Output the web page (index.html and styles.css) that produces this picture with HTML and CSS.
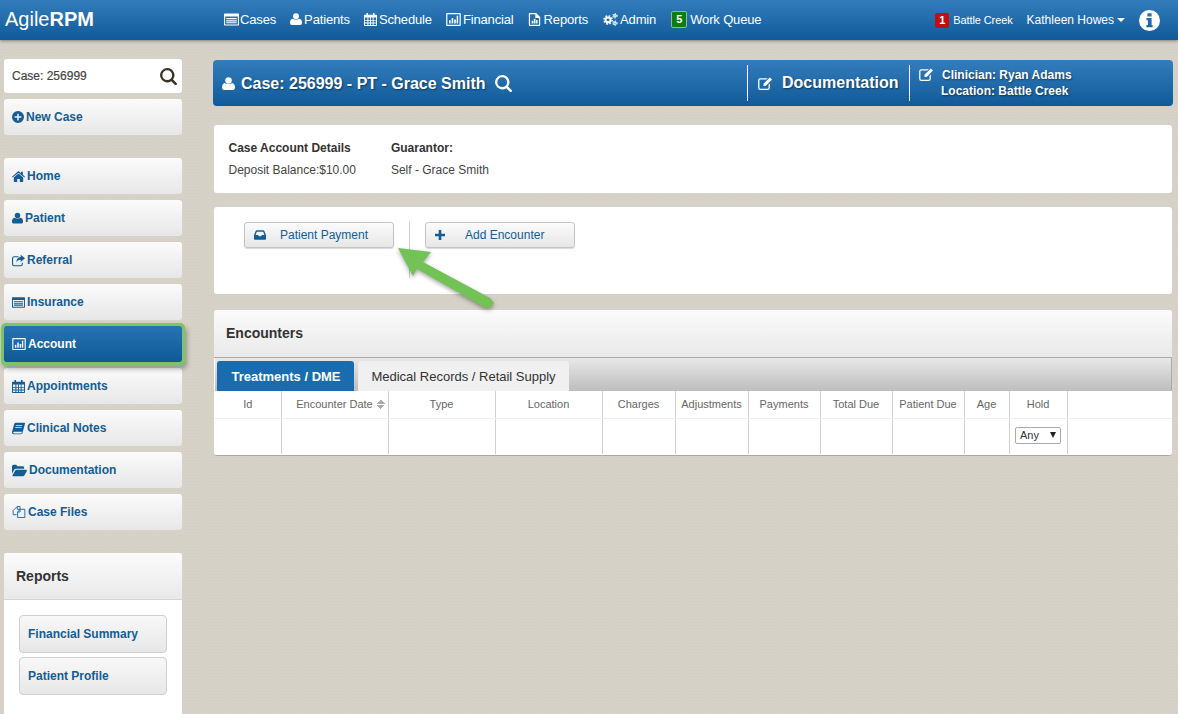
FILE: index.html
```html
<!DOCTYPE html>
<html lang="en">
<head>
    <meta charset="UTF-8">
    <meta name="viewport" content="width=device-width, initial-scale=1.0">
    <link rel="stylesheet" href="styles.css">
    <title>AgileRPM</title>
</head>
<body>
    <svg class="sprites" width="0" height="0">
        <symbol id="i-list" viewBox="0 0 20 16"><path fill-rule="evenodd" d="M1 0h18a1 1 0 0 1 1 1v14a1 1 0 0 1-1 1H1a1 1 0 0 1-1-1V1a1 1 0 0 1 1-1zm.5 4v10.500h17V4zM3 6h14v1.500H3zm0 3h14v1.500H3zm0 2.500h14V13H3z"/></symbol>
        <symbol id="i-user" viewBox="0 0 16 16"><circle cx="8" cy="4.200" r="4"/><path d="M3.500 7.500C5 9 11 9 12.500 7.500 14.800 8 16 10 16 13c0 2-1 3-2.500 3h-11C1 16 0 15 0 13c0-3 1.200-5 3.500-5.500z"/></symbol>
        <symbol id="i-cal" viewBox="0 0 16 16"><path fill-rule="evenodd" d="M3 0h2v2h6V0h2v2h2a1 1 0 0 1 1 1v12a1 1 0 0 1-1 1H1a1 1 0 0 1-1-1V3a1 1 0 0 1 1-1h2zM1.200 5.500v3h3v-3zm4.200 0v3h2.100v-3zm3.200 0v3h2.100v-3zm3.200 0v3h3v-3zM1.200 9.600v2.200h3V9.600zm4.200 0v2.200h2.100V9.600zm3.200 0v2.200h2.100V9.600zm3.200 0v2.200h3V9.600zM1.200 12.900v1.900h3v-1.900zm4.200 0v1.900h2.100v-1.900zm3.200 0v1.900h2.100v-1.900zm3.200 0v1.900h3v-1.900z"/></symbol>
        <symbol id="i-chart" viewBox="0 0 18 16"><path fill-rule="evenodd" d="M1 0h16a1 1 0 0 1 1 1v14a1 1 0 0 1-1 1H1a1 1 0 0 1-1-1V1a1 1 0 0 1 1-1zm.5 1.500v13h15v-13zM3.500 9h2v4h-2zm3.200-3h2v7h-2zm3.200 2h2v5h-2zm3-4.500h1.800V13h-1.800z"/></symbol>
        <symbol id="i-report" viewBox="0 0 14 16"><path fill-rule="evenodd" d="M1 0h8l5 5v10a1 1 0 0 1-1 1H1a1 1 0 0 1-1-1V1a1 1 0 0 1 1-1zm.5 1.500v13h11V6H8V1.500zM3.500 9.500h2v3.500h-2zM6.200 7h2v6h-2zM9 8.500h1.800V13H9z"/></symbol>
        <symbol id="i-cogs" viewBox="0 0 18 16">
            <g fill="none" stroke="currentColor">
                <circle cx="6" cy="8.500" r="3" stroke-width="2.400"/>
                <circle cx="6" cy="8.500" r="5" stroke-width="1.800" stroke-dasharray="2.200 1.730"/>
                <circle cx="14.500" cy="3.500" r="1.500" stroke-width="1.500"/>
                <circle cx="14.500" cy="3.500" r="2.800" stroke-width="1.200" stroke-dasharray="1.400 1.530"/>
                <circle cx="14.500" cy="12.500" r="1.500" stroke-width="1.500"/>
                <circle cx="14.500" cy="12.500" r="2.800" stroke-width="1.200" stroke-dasharray="1.400 1.530"/>
            </g>
        </symbol>
        <symbol id="i-search" viewBox="0 0 16 16"><path fill-rule="evenodd" d="M6.800 0a6.800 6.800 0 0 1 5.500 10.800l3.300 3.300a1.200 1.200 0 0 1-1.700 1.700l-3.300-3.300A6.800 6.800 0 1 1 6.800 0zm0 2.200a4.600 4.600 0 1 0 0 9.200 4.600 4.600 0 0 0 0-9.200z"/></symbol>
        <symbol id="i-plus-c" viewBox="0 0 16 16"><path fill-rule="evenodd" d="M8 0a8 8 0 1 1 0 16A8 8 0 0 1 8 0zM7 3.500v3.500H3.500v2H7v3.500h2V9h3.500V7H9V3.500z"/></symbol>
        <symbol id="i-home" viewBox="0 0 18 15"><path d="M9 0l3.500 3V1H15v4.200L18 8l-.8 1L9 2.200.8 9 0 8zM9 3.500l6.500 5.400V14a1 1 0 0 1-1 1h-3.700v-4H7.200v4H3.500a1 1 0 0 1-1-1V8.900z"/></symbol>
        <symbol id="i-share" viewBox="0 0 18 16"><path d="M12 0l6 5-6 5V7C9 7 7 8 6 11c0-5 2-7.500 6-8z"/><path d="M3 2h6v1.500H3A1.500 1.500 0 0 0 1.500 5v8A1.500 1.500 0 0 0 3 14.500h9a1.500 1.500 0 0 0 1.500-1.500v-2H15v2a3 3 0 0 1-3 3H3a3 3 0 0 1-3-3V5a3 3 0 0 1 3-3z"/></symbol>
        <symbol id="i-book" viewBox="0 0 16 14"><path fill-rule="evenodd" d="M4 0h11a1 1 0 0 1 1 1l-3 11a2 2 0 0 1-2 2H2a2 2 0 0 1-2-2c0-.6.100-1 .3-1.500L2.500 2A3 3 0 0 1 4 0zm.8 3l-.2.8h7.800l.2-.8zm-.7 2.500l-.2.8h7.800l.2-.8zM2.500 11c-.7 0-1 .4-1 1s.3 1 1 1h8.600c.4 0 .6-.2.700-.5l.4-1.500z"/></symbol>
        <symbol id="i-folder" viewBox="0 0 18 14"><path d="M0 2a2 2 0 0 1 2-2h3l1.500 2H13a1.500 1.500 0 0 1 1.500 1.500V5H5a3 3 0 0 0-2.600 1.500L0 11z"/><path d="M5 6.200h12c.9 0 1.200.7.800 1.400l-3 5.400a2 2 0 0 1-1.700 1H1.500c-.9 0-1.200-.7-.8-1.400l3-5.400A2 2 0 0 1 5 6.200z"/></symbol>
        <symbol id="i-files" viewBox="0 0 18 17"><path fill="none" stroke="currentColor" stroke-width="1.200" d="M6.500.700h4v4l-4 0zM6.500.700L.7 6.500v5.800h5M10.500 4.700h6.800v11.600H7V8.500zM7 8.500h3.500V4.700"/></symbol>
        <symbol id="i-inbox" viewBox="0 0 14 11"><path fill-rule="evenodd" d="M3 0h8a1 1 0 0 1 .9.600L14 5.500V10a1 1 0 0 1-1 1H1a1 1 0 0 1-1-1V5.500L2.100.600A1 1 0 0 1 3 0zm.3 1.600L1.800 5.500h3l.8 1.500h2.800l.8-1.500h3l-1.500-3.900z"/></symbol>
        <symbol id="i-plus" viewBox="0 0 10 10"><path d="M3.700 0h2.600v3.700H10v2.600H6.300V10H3.700V6.300H0V3.700h3.700z"/></symbol>
        <symbol id="i-edit" viewBox="0 0 17 15"><path d="M2.500 1.500H11L9.600 3H2.500A1 1 0 0 0 1.500 4v8.500a1 1 0 0 0 1 1H11a1 1 0 0 0 1-1V9l1.500-1.500v5A2.500 2.500 0 0 1 11 15H2.500A2.500 2.500 0 0 1 0 12.500V4a2.500 2.500 0 0 1 2.500-2.500z"/><path d="M13.500.500l2.500 2.500-7 7-3 .5.500-3z"/></symbol>
        <symbol id="i-info" viewBox="0 0 22 22"><path fill-rule="evenodd" d="M11 0a11 11 0 1 1 0 22 11 11 0 0 1 0-22zM8.800 3.500v3.200h4.400V3.500zM7.800 8.500v2.300h1.500v5H7.800V18h6.400v-2.200h-1V8.500z"/></symbol>
    </svg>

    <header class="topbar">
        <div class="logo">Agile<b>RPM</b></div>
        <nav class="topnav">
            <a class="tight"><svg class="ic w15"><use href="#i-list"/></svg>Cases</a>
            <a><svg class="ic w12"><use href="#i-user"/></svg>Patients</a>
            <a><svg class="ic w13"><use href="#i-cal"/></svg>Schedule</a>
            <a><svg class="ic w15"><use href="#i-chart"/></svg>Financial</a>
            <a class="wide"><svg class="ic w13"><use href="#i-report"/></svg>Reports</a>
            <a><svg class="ic w15"><use href="#i-cogs"/></svg>Admin</a>
            <a class="queue"><span class="count green">5</span>Work Queue</a>
        </nav>
        <div class="topright">
            <span class="count red">1</span>
            <span class="site">Battle Creek</span>
            <span class="who">Kathleen Howes<i class="caret"></i></span>
            <svg class="info"><use href="#i-info"/></svg>
        </div>
    </header>

    <div class="shell">
        <aside class="sidebar">
            <div class="searchbox">
                <span>Case: 256999</span>
                <svg class="searchicon"><use href="#i-search"/></svg>
            </div>
            <a class="sidebtn newcase"><svg class="ic w12"><use href="#i-plus-c"/></svg>New Case</a>

            <div class="sidemenu">
                <a class="sidebtn"><svg class="ic w13"><use href="#i-home"/></svg>Home</a>
                <a class="sidebtn"><svg class="ic w11"><use href="#i-user"/></svg>Patient</a>
                <a class="sidebtn"><svg class="ic w13"><use href="#i-share"/></svg>Referral</a>
                <a class="sidebtn"><svg class="ic w13"><use href="#i-list"/></svg>Insurance</a>
                <a class="sidebtn active"><svg class="ic w14"><use href="#i-chart"/></svg>Account</a>
                <a class="sidebtn"><svg class="ic w13"><use href="#i-cal"/></svg>Appointments</a>
                <a class="sidebtn"><svg class="ic w13"><use href="#i-book"/></svg>Clinical Notes</a>
                <a class="sidebtn"><svg class="ic w15"><use href="#i-folder"/></svg>Documentation</a>
                <a class="sidebtn"><svg class="ic w14"><use href="#i-files"/></svg>Case Files</a>
            </div>

            <div class="reports">
                <h3>Reports</h3>
                <div class="reportlist">
                    <a class="reportbtn">Financial Summary</a>
                    <a class="reportbtn">Patient Profile</a>
                </div>
            </div>
        </aside>

        <main class="content">
            <div class="casebar">
                <div class="casetitle">
                    <svg class="ic w13"><use href="#i-user"/></svg>
                    <span>Case: 256999 - PT - Grace Smith</span>
                    <svg class="ic w17"><use href="#i-search"/></svg>
                </div>
                <div class="casedoc">
                    <svg class="ic w15"><use href="#i-edit"/></svg>
                    <span>Documentation</span>
                </div>
                <div class="casemeta">
                    <svg class="ic w15"><use href="#i-edit"/></svg>
                    <div class="metalines">
                        <div>Clinician: Ryan Adams</div>
                        <div>Location: Battle Creek</div>
                    </div>
                </div>
            </div>

            <section class="card details">
                <div class="detailcol">
                    <h4>Case Account Details</h4>
                    <p>Deposit Balance:$10.00</p>
                </div>
                <div class="detailcol">
                    <h4>Guarantor:</h4>
                    <p>Self - Grace Smith</p>
                </div>
            </section>

            <section class="card actions">
                <a class="actionbtn"><svg class="ic w14"><use href="#i-inbox"/></svg><span>Patient Payment</span></a>
                <i class="actionsep"></i>
                <a class="actionbtn"><svg class="ic w10"><use href="#i-plus"/></svg><span>Add Encounter</span></a>
            </section>

            <section class="encounters">
                <h3>Encounters</h3>
                <div class="tabs">
                    <a class="tab on">Treatments / DME</a>
                    <a class="tab">Medical Records / Retail Supply</a>
                </div>
                <table class="grid">
                    <colgroup>
                        <col class="c-id"><col class="c-date"><col class="c-type"><col class="c-loc">
                        <col class="c-chg"><col class="c-adj"><col class="c-pay"><col class="c-tot">
                        <col class="c-pat"><col class="c-age"><col class="c-hold"><col>
                    </colgroup>
                    <tr class="headrow">
                        <th>Id</th>
                        <th>Encounter Date<i class="sort"></i></th>
                        <th>Type</th>
                        <th>Location</th>
                        <th>Charges</th>
                        <th>Adjustments</th>
                        <th>Payments</th>
                        <th>Total Due</th>
                        <th>Patient Due</th>
                        <th>Age</th>
                        <th>Hold</th>
                        <th></th>
                    </tr>
                    <tr class="filterrow">
                        <td></td><td></td><td></td><td></td><td></td><td></td><td></td><td></td><td></td><td></td>
                        <td><span class="anyselect">Any<i></i></span></td>
                        <td></td>
                    </tr>
                </table>
            </section>
        </main>
    </div>

    <svg class="arrow" width="110" height="75" viewBox="390 240 110 75">
        <path d="M398 248L431 252 423 262 490 298 494 303 490 308 484 307 417 269 413 276z" fill="#72c255"/>
    </svg>
</body>
</html>
```

FILE: styles.css
```css
html, body {
    margin: 0;
    height: 714px;
    overflow: hidden;
}

body {
    position: relative;
    background-color: #d6d2c8;
    background-image: radial-gradient(#d2cec4 1px, transparent 1px);
    background-size: 3px 3px;
    font-family: "Liberation Sans", Arial, sans-serif;
    font-size: 12px;
    color: #333;
}

a {
    display: block;
}

.sprites {
    position: absolute;
}

.ic {
    fill: currentColor;
    height: 14px;
    flex: none;
}

.w10 { width: 10px; height: 10px; }
.w11 { width: 11px; height: 12px; }
.w12 { width: 12px; height: 12px; }
.w13 { width: 13px; height: 13px; }
.w14 { width: 14px; height: 12px; }
.w15 { width: 15px; height: 13px; }
.w17 { width: 17px; height: 17px; }

/* barra de cima */
.topbar {
    height: 40px;
    display: flex;
    align-items: center;
    background: linear-gradient(to bottom, #337dbd, #115a9a);
    box-shadow: 0 1px 3px rgba(0, 0, 0, 0.4);
    color: #fff;
}

.logo {
    width: 224px;
    padding-left: 5px;
    padding-bottom: 1px;
    box-sizing: border-box;
    font-size: 20px;
}

.topnav {
    display: flex;
    align-items: center;
    gap: 14px;
    padding-bottom: 2px;
    font-size: 13px;
    letter-spacing: -0.15px;
}

.topnav a {
    display: flex;
    align-items: center;
    gap: 2px;
}

.topnav a.tight {
    gap: 1px;
}

.topnav a.wide {
    gap: 3px;
    margin-right: 1px;
}

.topnav .queue {
    margin-left: 1px;
    gap: 3px;
}

.count {
    display: inline-block;
    width: 14px;
    height: 15px;
    line-height: 15px;
    text-align: center;
    border-radius: 2px;
    font-size: 11px;
    font-weight: bold;
    color: #fff;
}

.count.green {
    background: #0b7d12;
    border: 1px solid #8fb89a;
}

.count.red {
    background: #c10d12;
}

.topright {
    margin-left: auto;
    display: flex;
    align-items: center;
    padding-right: 18px;
}

.site {
    margin-left: 4px;
    font-size: 11px;
    letter-spacing: -0.1px;
}

.who {
    margin-left: 14px;
    font-size: 12px;
}

.caret {
    display: inline-block;
    margin-left: 3px;
    vertical-align: 2px;
    border-top: 4px solid #fff;
    border-left: 4px solid transparent;
    border-right: 4px solid transparent;
}

.info {
    width: 21px;
    height: 21px;
    margin-left: 14px;
    fill: #fff;
}

.shell {
    display: flex;
}

/* coluna da esquerda */
.sidebar {
    width: 178px;
    margin-left: 4px;
    padding-top: 19px;
}

.searchbox {
    height: 34px;
    margin-bottom: 6px;
    padding: 0 5px 0 8px;
    display: flex;
    align-items: center;
    justify-content: space-between;
    background: #fff;
    border-radius: 3px;
    color: #444;
    -webkit-text-stroke: 0.2px #444;
}

.searchicon {
    width: 17px;
    height: 17px;
    fill: #3a3226;
}

.sidebtn {
    height: 36px;
    display: flex;
    align-items: center;
    gap: 2px;
    padding-left: 8px;
    background: linear-gradient(to bottom, #fbfbfb, #e7e7e7);
    border-radius: 3px;
    font-weight: bold;
    color: #135c94;
}

.sidemenu {
    margin-top: 23px;
    display: flex;
    flex-direction: column;
    gap: 6px;
}

.sidebtn.active {
    position: relative;
    background: linear-gradient(to bottom, #2873b4, #0f5995);
    color: #fff;
    border-radius: 2px;
    outline: 3px solid #7cc46a;
    box-shadow: 0 1px 0 3px #7cc46a, 2px 4px 5px 3px rgba(0, 0, 0, 0.3);
}

.reports {
    margin-top: 23px;
    height: 170px;
    background: #fff;
    border-radius: 3px 3px 0 0;
}

.reports h3 {
    margin: 0;
    height: 46px;
    line-height: 46px;
    padding-left: 12px;
    font-size: 14px;
    color: #333;
    background: linear-gradient(to bottom, #fbfbfb, #e9e9e9);
    border-bottom: 1px solid #d5d5d5;
    border-radius: 3px 3px 0 0;
}

.reportlist {
    padding: 15px 15px 0;
    display: flex;
    flex-direction: column;
    gap: 4px;
}

.reportbtn {
    height: 36px;
    line-height: 36px;
    padding-left: 8px;
    background: linear-gradient(to bottom, #f8f8f8, #e7e7e7);
    border: 1px solid #cfcfcf;
    border-radius: 4px;
    font-weight: bold;
    color: #135c94;
}

/* parte principal */
.content {
    width: 960px;
    margin-left: 31px;
    padding-top: 20px;
}

.casebar {
    height: 46px;
    display: flex;
    align-items: center;
    background: linear-gradient(to bottom, #337dbd, #115a9a);
    border-radius: 4px;
    color: #fff;
    font-weight: bold;
    text-shadow: 1px 1px 2px rgba(0, 0, 0, 0.5);
}

.casetitle {
    width: 534px;
    padding-left: 9px;
    box-sizing: border-box;
    display: flex;
    align-items: center;
    gap: 6px;
    font-size: 16px;
}

.casetitle span {
    padding-top: 1px;
}

.casetitle .w17 {
    margin-left: 3px;
}

.casedoc {
    width: 163px;
    height: 36px;
    box-sizing: border-box;
    display: flex;
    align-items: center;
    gap: 9px;
    padding-left: 10px;
    border-left: 1px solid #fff;
    border-right: 1px solid #fff;
    font-size: 16px;
}

.casemeta {
    display: flex;
    align-items: flex-start;
    gap: 8px;
    padding-left: 9px;
    font-size: 12px;
    line-height: 16px;
}

.casemeta .ic {
    margin-top: 1px;
}

.metalines div:last-child {
    margin-left: -1px;
}

.card {
    margin-left: 1px;
    margin-right: 1px;
    background: #fff;
    border-radius: 3px;
}

.details {
    height: 68px;
    margin-top: 19px;
    display: flex;
    box-sizing: border-box;
    padding: 16px 0 0 14.5px;
    gap: 35px;
}

.detailcol h4 {
    margin: 0 0 8px;
    font-size: 12px;
    line-height: 14px;
}

.detailcol p {
    margin: 0;
    line-height: 14px;
    color: #444;
}

.actions {
    height: 87px;
    margin-top: 14px;
    box-sizing: border-box;
    padding: 15px 0 0 30px;
    display: flex;
    align-items: flex-start;
}

.actionbtn {
    width: 150px;
    height: 26px;
    box-sizing: border-box;
    display: flex;
    align-items: center;
    padding-left: 9px;
    background: linear-gradient(to bottom, #fbfbfb, #e6e6e6);
    border: 1px solid #c4c4c4;
    border-radius: 3px;
    box-shadow: 0 1px 1px rgba(0, 0, 0, 0.15);
    color: #135c94;
}

.actionbtn .w14 {
    width: 12px;
    height: 10px;
    margin-right: 14px;
}

.actionbtn .w10 {
    margin-right: 20px;
}

.actionsep {
    width: 1px;
    height: 57px;
    margin: -1px 15px 0;
    background: #d0d0d0;
}

.encounters {
    margin: 16px 1px 0;
    height: 146px;
    background: #fff;
    border-radius: 3px;
    border-bottom: 1px solid #aaa;
    box-sizing: border-box;
}

.encounters h3 {
    margin: 0;
    height: 48px;
    line-height: 46px;
    padding-left: 12px;
    font-size: 14px;
    background: linear-gradient(to bottom, #fbfbfb, #e9e9e9);
    border-radius: 3px 3px 0 0;
    border-bottom: 1px solid #a9a9a9;
    box-sizing: border-box;
}

.tabs {
    height: 33px;
    margin-left: 1px;
    box-sizing: border-box;
    padding: 3px 0 0 2px;
    display: flex;
    gap: 4px;
    background: linear-gradient(to bottom, #e8e8e8, #bdbdbd);
    border-right: 1px solid #aaa;
}

.tab {
    width: 211px;
    box-sizing: border-box;
    padding-top: 1px;
    text-align: center;
    line-height: 29px;
    font-size: 13px;
    background: #f0f0f0;
    border-radius: 3px 3px 0 0;
    color: #333;
}

.tab.on {
    width: 137px;
    padding-left: 1px;
    background: #1a6cae;
    color: #fff;
    font-weight: bold;
}

.grid {
    width: 957px;
    margin-left: 1px;
    table-layout: fixed;
    border-collapse: collapse;
}

.c-id { width: 66px; }
.c-date { width: 107px; }
.c-type { width: 107px; }
.c-loc { width: 107px; }
.c-chg { width: 73px; }
.c-adj { width: 73px; }
.c-pay { width: 72px; }
.c-tot { width: 72px; }
.c-pat { width: 72px; }
.c-age { width: 45px; }
.c-hold { width: 58px; }

.grid th,
.grid td {
    padding: 0;
    text-align: center;
    font-weight: normal;
    font-size: 11px;
    color: #666;
    border-right: 1px solid #d0d0d0;
}

.grid th:last-child,
.grid td:last-child {
    border-right: none;
}

.headrow th {
    height: 27px;
    padding-bottom: 1px;
    box-sizing: border-box;
    border-bottom: 1px solid #eee;
}

.filterrow td {
    height: 36px;
    padding-bottom: 2px;
    box-sizing: border-box;
}

.sort {
    display: inline-block;
    width: 8px;
    height: 9px;
    margin-left: 4px;
    margin-right: -12px;
    vertical-align: -1px;
    background:
        linear-gradient(to bottom right, transparent 50%, #aaa 50%) 0 0 / 4px 4px no-repeat,
        linear-gradient(to bottom left, transparent 50%, #aaa 50%) 4px 0 / 4px 4px no-repeat,
        linear-gradient(to top right, transparent 50%, #aaa 50%) 0 5px / 4px 4px no-repeat,
        linear-gradient(to top left, transparent 50%, #aaa 50%) 4px 5px / 4px 4px no-repeat;
}

.anyselect {
    display: inline-flex;
    align-items: center;
    justify-content: space-between;
    width: 46px;
    height: 17px;
    box-sizing: border-box;
    padding: 0 4px;
    border: 1px solid #aaa;
    border-radius: 2px;
    color: #333;
}

.anyselect i {
    border-top: 6px solid #222;
    border-left: 3px solid transparent;
    border-right: 3px solid transparent;
}

/* seta verde por cima de tudo */
.arrow {
    position: absolute;
    left: 390px;
    top: 240px;
    filter: drop-shadow(0 2px 2px rgba(0, 0, 0, 0.35));
}
```
